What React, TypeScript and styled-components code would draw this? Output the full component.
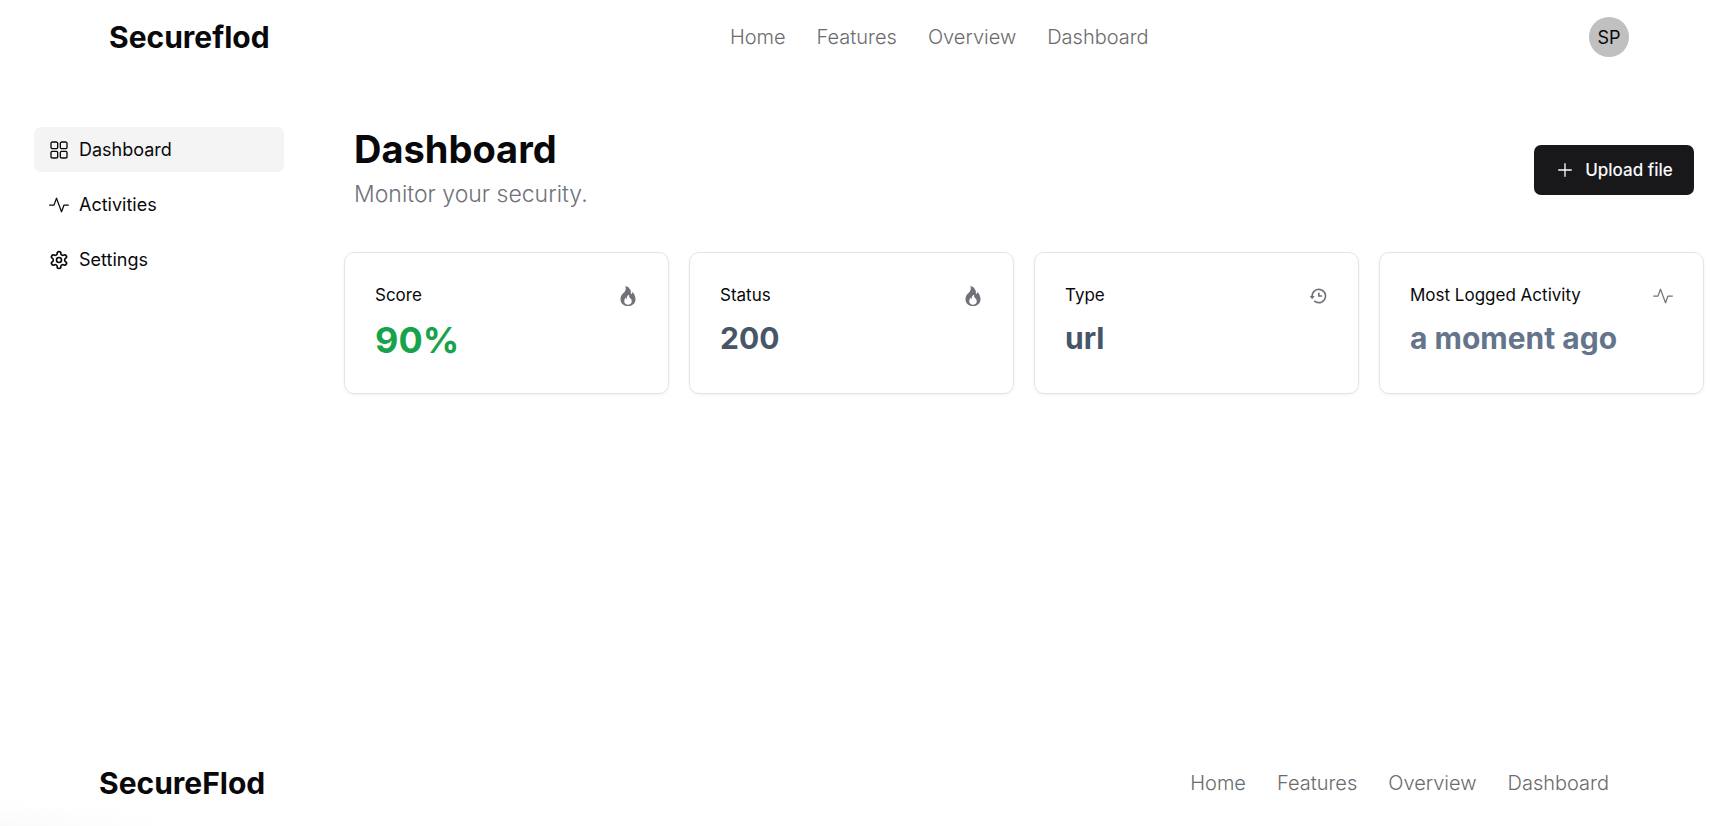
import React from 'react';
import styled, { createGlobalStyle } from 'styled-components';
import type { IconType } from 'react-icons';
import { RxDashboard, RxPlus } from 'react-icons/rx';
import { BsActivity, BsFire } from 'react-icons/bs';
import { LuSettings } from 'react-icons/lu';
import { BiHistory } from 'react-icons/bi';

const GlobalStyle = createGlobalStyle`
  *, *::before, *::after {
    box-sizing: border-box;
  }
  body {
    margin: 0;
    background: #ffffff;
    color: #09090b;
    font-family: Inter, "Liberation Sans", sans-serif;
  }
  h1, h2, p {
    margin: 0;
  }
`;

const Page = styled.div`
  display: flex;
  flex-direction: column;
  min-height: 100vh;
`;

const Header = styled.header`
  display: flex;
  align-items: center;
  justify-content: space-between;
  height: 74px;
  padding: 0 87px 0 109px;
`;

const Logo = styled.a`
  padding-right: 20px;
  color: inherit;
  font-size: 30px;
  font-weight: 700;
  line-height: 40px;
  text-decoration: none;
`;

const LinkBar = styled.nav`
  display: flex;
  gap: 31px;
`;

const NavLink = styled.a`
  color: #6b6b6d;
  font-size: 20px;
  font-weight: 300;
  line-height: 30px;
  text-decoration: none;
`;

const Avatar = styled.button`
  display: flex;
  align-items: center;
  justify-content: center;
  width: 40px;
  height: 40px;
  padding: 0;
  border: 0;
  border-radius: 50%;
  background: #c0c0c0;
  color: #09090b;
  font: 400 18px Inter, "Liberation Sans", sans-serif;
`;

const Body = styled.div`
  display: flex;
  flex: 1;
  gap: 60px;
  padding: 53px 12px 40px 34px;
`;

const SideNav = styled.nav`
  display: flex;
  flex-direction: column;
  flex: 0 0 250px;
  gap: 10px;
`;

const SideLink = styled.a<{ $active?: boolean }>`
  display: flex;
  align-items: center;
  gap: 10px;
  height: 45px;
  padding: 0 15px;
  border-radius: 7px;
  background: ${({ $active }) => ($active ? '#f4f4f5' : 'transparent')};
  color: #09090b;
  font-size: 18px;
  text-decoration: none;
`;

const Main = styled.main`
  flex: 1;
  min-width: 0;
`;

const TitleRow = styled.div`
  display: flex;
  align-items: center;
  justify-content: space-between;
  padding: 0 10px;
`;

const Title = styled.h1`
  font-size: 38px;
  font-weight: 700;
  line-height: 45px;
`;

const Subtitle = styled.p`
  margin-top: 5px;
  color: #71717a;
  font-size: 23px;
  font-weight: 300;
  line-height: 35px;
`;

const UploadButton = styled.button`
  display: flex;
  align-items: center;
  justify-content: center;
  gap: 10px;
  min-width: 160px;
  height: 50px;
  padding: 0 20px;
  border: 0;
  border-radius: 7px;
  background: #18181b;
  color: #fafafa;
  font: 500 17px Inter, "Liberation Sans", sans-serif;
`;

const Cards = styled.div`
  display: grid;
  grid-template-columns: repeat(4, minmax(0, 1fr));
  gap: 20px;
  margin-top: 40px;
`;

const Card = styled.section`
  min-height: 142px;
  padding: 30px;
  border: 1px solid #e4e4e7;
  border-radius: 10px;
  box-shadow: 0 1px 3px rgba(0, 0, 0, 0.06);
`;

const CardHead = styled.div`
  display: flex;
  align-items: center;
  justify-content: space-between;
  margin-bottom: 10px;
  color: #71717a;
`;

const CardTitle = styled.h2`
  color: #09090b;
  font-size: 17px;
  font-weight: 400;
  line-height: 25px;
`;

const CardValue = styled.p<{ $color: string; $large?: boolean }>`
  color: ${({ $color }) => $color};
  font-size: ${({ $large }) => ($large ? 36 : 30)}px;
  font-weight: 700;
  line-height: ${({ $large }) => ($large ? 45 : 40)}px;
`;

const Footer = styled.footer`
  display: flex;
  align-items: center;
  justify-content: space-between;
  height: 86px;
  padding: 0 107px 0 99px;
  background: radial-gradient(170px 24px at 0 100%, #fafafa, #ffffff);
`;

const pages = ['Home', 'Features', 'Overview', 'Dashboard'];

const sections: { label: string; Icon: IconType }[] = [
  { label: 'Dashboard', Icon: RxDashboard },
  { label: 'Activities', Icon: BsActivity },
  { label: 'Settings', Icon: LuSettings },
];

const stats: { title: string; value: string; color: string; large?: boolean; Icon: IconType }[] = [
  { title: 'Score', value: '90%', color: '#16a34a', large: true, Icon: BsFire },
  { title: 'Status', value: '200', color: '#475569', Icon: BsFire },
  { title: 'Type', value: 'url', color: '#475569', Icon: BiHistory },
  { title: 'Most Logged Activity', value: 'a moment ago', color: '#64748b', Icon: BsActivity },
];

function PageLinks({ label }: { label: string }) {
  return (
    <LinkBar aria-label={label}>
      {pages.map((page) => (
        <NavLink key={page} href={`#${page.toLowerCase()}`}>
          {page}
        </NavLink>
      ))}
    </LinkBar>
  );
}

export default function App() {
  return (
    <>
      <GlobalStyle />
      <Page>
        <Header>
          <Logo href="#home">Secureflod</Logo>
          <PageLinks label="Main" />
          <Avatar type="button">SP</Avatar>
        </Header>
        <Body>
          <SideNav aria-label="Sections">
            {sections.map(({ label, Icon }, index) => (
              <SideLink key={label} href={`#${label.toLowerCase()}`} $active={index === 0}>
                <Icon size={20} aria-hidden />
                {label}
              </SideLink>
            ))}
          </SideNav>
          <Main>
            <TitleRow>
              <div>
                <Title>Dashboard</Title>
                <Subtitle>Monitor your security.</Subtitle>
              </div>
              <UploadButton type="button">
                <RxPlus size={20} aria-hidden />
                Upload file
              </UploadButton>
            </TitleRow>
            <Cards>
              {stats.map(({ title, value, color, large, Icon }) => (
                <Card key={title}>
                  <CardHead>
                    <CardTitle>{title}</CardTitle>
                    <Icon size={20} aria-hidden />
                  </CardHead>
                  <CardValue $color={color} $large={large}>
                    {value}
                  </CardValue>
                </Card>
              ))}
            </Cards>
          </Main>
        </Body>
        <Footer>
          <Logo href="#home">SecureFlod</Logo>
          <PageLinks label="Footer" />
        </Footer>
      </Page>
    </>
  );
}
